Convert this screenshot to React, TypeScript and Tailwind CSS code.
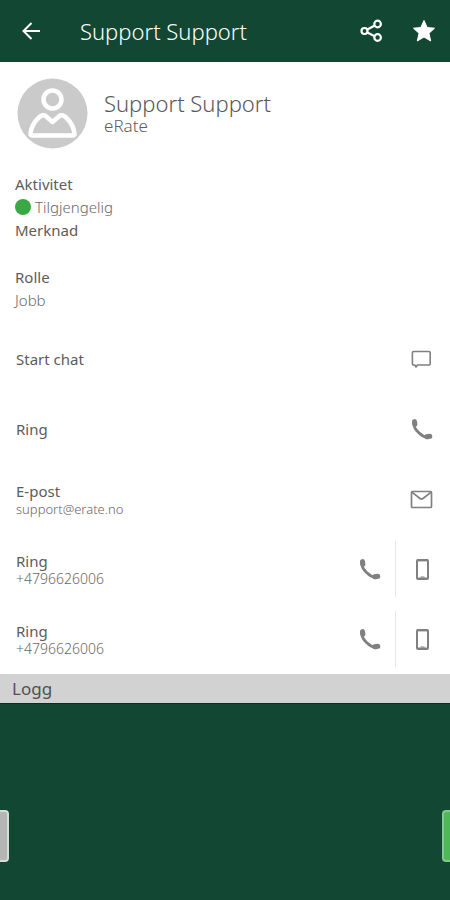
import type { ReactNode } from 'react'

interface ContactRowProps {
  title: string
  detail?: ReactNode
  actions: ReactNode
}

function PhoneIcon() {
  return (
    <svg viewBox="0 0 24 24" className="size-6 text-[#808080]" fill="none" stroke="currentColor" strokeLinecap="round">
      <path d="M3.500 6.500C4.500 13 11 19.500 18 20.800" strokeWidth="2.800" />
      <path d="M4.500 4.600l.4 2.600" strokeWidth="5" />
      <path d="M16.800 19.800l3-.5" strokeWidth="5" />
    </svg>
  )
}

function ChatIcon() {
  return (
    <svg viewBox="0 0 24 24" className="size-6 text-[#808080]" fill="none" stroke="currentColor" strokeWidth="1.600" strokeLinejoin="round">
      <path d="M3.600 4.500H19a1.200 1.200 0 0 1 1.200 1.200v11.100A1.200 1.200 0 0 1 19 18H7.500L6 20l-1.200-2H3.600a1.200 1.200 0 0 1-1.200-1.200V5.700A1.200 1.200 0 0 1 3.600 4.500z" />
    </svg>
  )
}

function MailIcon() {
  return (
    <svg viewBox="0 0 24 24" className="size-6 text-[#808080]" fill="none" stroke="currentColor" strokeWidth="1.700" strokeLinejoin="round">
      <rect x="1.500" y="4.500" width="20" height="16" rx="1" />
      <path d="M2.200 5.300l7.800 6.200q1.500 1.200 3 0l7.800-6.200" />
    </svg>
  )
}

function MobileIcon() {
  return (
    <svg viewBox="0 0 24 24" className="size-6 text-[#808080]" fill="none" stroke="currentColor">
      <rect x="6" y="3" width="11" height="19" rx="1" strokeWidth="2" />
      <path d="M6 3.200h11" strokeWidth="2.400" />
      <path d="M7 21h2.500M13.500 21H16M9.500 20.200h4" strokeWidth="1.200" />
    </svg>
  )
}

function Avatar() {
  return (
    <svg viewBox="0 0 72 72" className="size-18 shrink-0" fill="none" stroke="white" strokeWidth="4.500" strokeLinejoin="round">
      <circle cx="36.500" cy="35.500" r="35" fill="#cacaca" stroke="none" />
      <circle cx="36.500" cy="21.500" r="9" />
      <path d="M29 37.500l7.500 6.500 7.500-6.500q3.500-1 6.500 2.500 7 6.500 8 15.500.3 2-1.500 2H16q-1.800 0-1.500-2 1-9 8-15.500 3-3.500 6.500-2.500z" />
    </svg>
  )
}

function Header() {
  return (
    <header className="flex h-[62px] items-center bg-[#124734] px-3 text-white">
      <button type="button" aria-label="Tilbake" className="flex size-10 items-center justify-center">
        <svg viewBox="0 0 24 24" className="size-6" fill="none" stroke="currentColor" strokeWidth="2">
          <path d="M11.500 4L3.500 12l8 8M3.500 12H20" />
        </svg>
      </button>
      <h1 className="ml-7 flex-1 text-[22px] leading-6 font-light">Support Support</h1>
      <button type="button" aria-label="Del" className="mr-5 flex h-10 w-9 items-center justify-center">
        <svg viewBox="0 0 24 24" className="size-6" fill="none" stroke="currentColor" strokeWidth="2.200">
          <circle cx="4.500" cy="12" r="3" />
          <circle cx="17.600" cy="5" r="3.300" />
          <circle cx="17.600" cy="18.500" r="3.300" />
          <path d="M7.300 10.500l7.500-4M7.300 13.500l7.500 3.700" />
        </svg>
      </button>
      <button type="button" aria-label="Favoritt" className="flex h-10 w-7 items-center justify-center">
        <svg viewBox="0 0 24 24" className="size-6" fill="currentColor" stroke="currentColor" strokeLinejoin="round">
          <path d="M12 1.500l3.200 7 7.300.7-5.500 5.100 1.700 7.700-6.700-4-6.700 4L7 14.300 1.500 9.200l7.300-.7z" />
        </svg>
      </button>
    </header>
  )
}

function ContactRow({ title, detail, actions }: ContactRowProps) {
  return (
    <li className="flex h-[70px] items-center justify-between pl-4">
      <div>
        <p className="text-[15px] leading-5 text-[#5c5c5c]">{title}</p>
        {detail}
      </div>
      {actions}
    </li>
  )
}

function Action({ label, children }: { label: string; children: ReactNode }) {
  return (
    <button type="button" aria-label={label} className="flex h-14 w-14 items-center justify-center">
      {children}
    </button>
  )
}

function NumberRow({ number }: { number: string }) {
  return (
    <ContactRow
      title="Ring"
      detail={<p className="text-[14px] leading-4 font-light text-[#686868]">{number}</p>}
      actions={
        <div className="flex">
          <button type="button" aria-label="Ring" className="flex h-14 w-[50px] items-center justify-center">
            <PhoneIcon />
          </button>
          <span className="w-px bg-[#e8e8e8]" />
          <button type="button" aria-label="Mobil" className="flex h-14 w-[54px] items-center justify-center">
            <MobileIcon />
          </button>
        </div>
      }
    />
  )
}

export default function App() {
  return (
    <div className="flex min-h-screen flex-col bg-[#124734] font-['Noto_Sans',sans-serif]">
      <Header />
      <main className="bg-white">
        <section className="flex items-center gap-4 px-4 pt-4">
          <Avatar />
          <div>
            <h2 className="text-[22px] leading-6 font-light text-[#585858]">Support Support</h2>
            <p className="text-[17px] leading-[22px] font-light text-[#606060]">eRate</p>
          </div>
        </section>

        {/* Status and role */}
        <section className="px-[15px] pt-[23px] pb-3 text-[15px] leading-[23px] text-[#5c5c5c]">
          <h3>Aktivitet</h3>
          <p className="flex items-center gap-1 leading-[22px] font-light text-[#686868]">
            <span className="size-4 rounded-full bg-[#39a845]" />
            Tilgjengelig
          </p>
          <h3 className="pt-px">Merknad</h3>
          <h3 className="pt-6">Rolle</h3>
          <p className="font-light text-[#686868]">Jobb</p>
        </section>

        <ul>
          <ContactRow title="Start chat" actions={<Action label="Start chat"><ChatIcon /></Action>} />
          <ContactRow title="Ring" actions={<Action label="Ring"><PhoneIcon /></Action>} />
          <ContactRow
            title="E-post"
            detail={<p className="text-[13px] leading-4 font-light text-[#686868]">support@erate.no</p>}
            actions={<Action label="E-post"><MailIcon /></Action>}
          />
          <NumberRow number="+4796626006" />
          <NumberRow number="+4796626006" />
        </ul>
        <h2 className="border-b border-[#0a2e20] bg-[#d2d2d2] px-3 text-[17px] leading-[29px] text-[#505050]">Logg</h2>
      </main>

      {/* Drawer handles at the screen edges */}
      <footer className="mt-auto flex justify-between pb-[38px]">
        <button type="button" aria-label="Forrige" className="h-[52px] w-[9px] rounded-r border-2 border-l-0 border-[#d4ddd8] bg-[#b5b5b5]" />
        <button type="button" aria-label="Neste" className="h-[52px] w-2 rounded-l border-2 border-r-0 border-[#83c98a] bg-[#4db856]" />
      </footer>
    </div>
  )
}
